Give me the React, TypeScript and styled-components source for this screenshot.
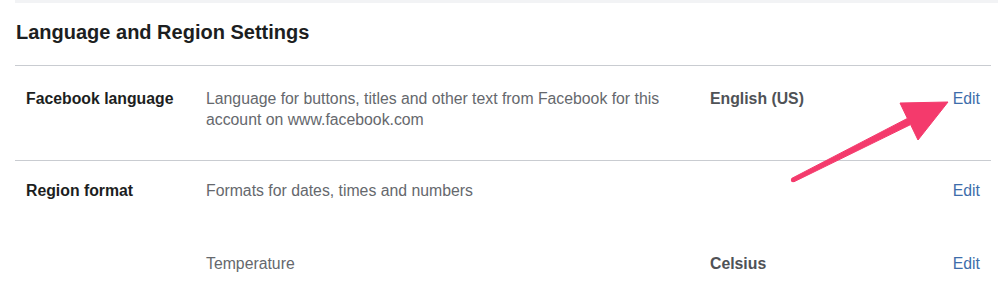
import styled, {createGlobalStyle} from 'styled-components';

const GlobalStyle = createGlobalStyle`
  html, body {
    margin: 0;
    padding: 0;
    background: #ffffff;
  }
  body {
    font-family: "Liberation Sans", Arial, sans-serif;
    -webkit-font-smoothing: antialiased;
  }
`;

const Page = styled.div`
  position: relative;
  width: 998px;
  height: 298px;
  overflow: hidden;
  background: #ffffff;
`;

const TopEdge = styled.div`
  height: 3px;
  margin-left: 15px;
  background: #f2f3f5;
`;

const Card = styled.div`
  padding: 0 7px 0 15px;
`;

const Heading = styled.h2`
  margin: 0;
  height: 63px;
  display: flex;
  align-items: center;
  padding-left: 1px;
  padding-bottom: 3px;
  font-size: 20px;
  font-weight: 700;
  color: #1c1e21;
  border-bottom: 1px solid #c9ccd1;
  box-sizing: border-box;
`;

const Section = styled.div<{$last?: boolean}>`
  border-bottom: ${({$last}) => ($last ? 'none' : '1px solid #c9ccd1')};
  padding-bottom: ${({$last}) => ($last ? '0' : '10px')};
`;

const Row = styled.div<{$top: number; $height: number}>`
  display: grid;
  grid-template-columns: 180px 504px 1fr auto;
  align-items: start;
  padding: ${({$top}) => $top}px 11px 0 11px;
  height: ${({$height}) => $height}px;
  box-sizing: border-box;
  font-size: 15.8px;
  line-height: 21px;
`;

const Label = styled.div`
  font-weight: 700;
  color: #1c1e21;
`;

const Description = styled.div`
  color: #65686d;
  padding-right: 20px;
`;

const Value = styled.div`
  font-weight: 700;
  color: #4f5256;
`;

const EditLink = styled.a`
  color: #3d6daa;
  text-decoration: none;
  cursor: pointer;
`;

const Arrow = styled.svg`
  position: absolute;
  left: 0;
  top: 0;
  pointer-events: none;
`;

type Item = {
  label?: string;
  description: string;
  value?: string;
};

function SettingRow({item, top, height}: {item: Item; top: number; height: number}) {
  return (
    <Row $top={top} $height={height}>
      <Label>{item.label}</Label>
      <Description>{item.description}</Description>
      <Value>{item.value}</Value>
      <EditLink>Edit</EditLink>
    </Row>
  );
}

export default function App() {
  return (
    <Page>
      <GlobalStyle />
      <TopEdge />
      <Card>
        <Heading>Language and Region Settings</Heading>
        <Section>
          <SettingRow
            top={22}
            height={84}
            item={{
              label: 'Facebook language',
              description:
                'Language for buttons, titles and other text from Facebook for this account on www.facebook.com',
              value: 'English (US)',
            }}
          />
        </Section>
        <Section $last>
          <SettingRow
            top={19}
            height={73}
            item={{label: 'Region format', description: 'Formats for dates, times and numbers'}}
          />
          <SettingRow
            top={19}
            height={73}
            item={{description: 'Temperature', value: 'Celsius'}}
          />
        </Section>
      </Card>
      <Arrow width="998" height="298" viewBox="0 0 998 298">
        <circle cx="793" cy="180" r="2.2" fill="#f43a6c" />
        <polygon
          points="792.1,178.2 907.4,118.4 900,103 948,102 918,140 910.6,124.6 793.9,181.8"
          fill="#f43a6c"
          strokeLinejoin="round"
          stroke="#f43a6c"
          strokeWidth="1"
        />
      </Arrow>
    </Page>
  );
}
